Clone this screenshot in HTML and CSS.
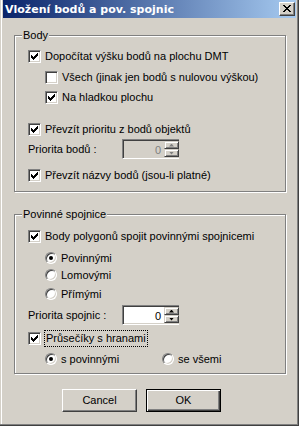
FILE: index.html
```html
<html>
    <head>
        <link rel="stylesheet" href="styles.css">
    </head>
    <body>
        <div class="window">
            <div class="titlebar">
                <span class="title">Vložení bodů a pov. spojnic</span>
                <span class="close">
                    <svg width="8" height="7" viewBox="0 0 8 7" shape-rendering="crispEdges"><path d="M0 0h2v1h-2z M6 0h2v1h-2z M1 1h2v1h-2z M5 1h2v1h-2z M2 2h4v1h-4z M3 3h2v1h-2z M2 4h4v1h-4z M1 5h2v1h-2z M5 5h2v1h-2z M0 6h2v1h-2z M6 6h2v1h-2z" fill="#000"/></svg>
                </span>
            </div>

            <div class="group g1">
                <span class="legend">Body</span>
                <div class="row r1"><span class="cb on"></span><span class="lbl">Dopočítat výšku bodů na plochu DMT</span></div>
                <div class="row r2 sub"><span class="cb"></span><span class="lbl">Všech (jinak jen bodů s nulovou výškou)</span></div>
                <div class="row r3 sub"><span class="cb on"></span><span class="lbl">Na hladkou plochu</span></div>
                <div class="row r4"><span class="cb on"></span><span class="lbl">Převzít prioritu z bodů objektů</span></div>
                <div class="spinrow s1">
                    <span class="spinlbl">Priorita bodů :</span>
                    <span class="spin disabled"><span class="field">0</span><span class="arrows"><span class="arr up"></span><span class="arr down"></span></span></span>
                </div>
                <div class="row r6"><span class="cb on"></span><span class="lbl">Převzít názvy bodů (jsou-li platné)</span></div>
            </div>

            <div class="group g2">
                <span class="legend">Povinné spojnice</span>
                <div class="row q1"><span class="cb on"></span><span class="lbl">Body polygonů spojit povinnými spojnicemi</span></div>
                <div class="row rad q2 sub"><span class="rb on"></span><span class="lbl">Povinnými</span></div>
                <div class="row rad q3 sub"><span class="rb"></span><span class="lbl">Lomovými</span></div>
                <div class="row rad q4 sub"><span class="rb"></span><span class="lbl">Přímými</span></div>
                <div class="spinrow s2">
                    <span class="spinlbl">Priorita spojnic :</span>
                    <span class="spin"><span class="field">0</span><span class="arrows"><span class="arr up"></span><span class="arr down"></span></span></span>
                </div>
                <div class="row q6"><span class="cb on"></span><span class="lbl focus">Průsečíky s hranami</span></div>
                <div class="row rad q7 sub">
                    <span class="rb on"></span><span class="lbl opt1">s povinnými</span>
                    <span class="rb"></span><span class="lbl">se všemi</span>
                </div>
            </div>

            <div class="buttons">
                <div class="btn">Cancel</div>
                <div class="btn def">OK</div>
            </div>
        </div>
    </body>
</html>
```

FILE: styles.css
```css
body {
    margin: 0;
    font-family: "Liberation Sans", Arial, sans-serif;
    font-size: 11px;
    color: #000;
}
.window {
    width: 299px;
    height: 426px;
    box-sizing: border-box;
    background: #d4d0c8;
    padding: 0 3px 3px 3px;
    box-shadow: inset -1px -1px 0 #404040, inset -2px -2px 0 #808080, inset 1px 0 0 #d4d0c8, inset 2px 0 0 #fff;
    overflow: hidden;
}
.titlebar {
    height: 18px;
    display: flex;
    align-items: center;
    padding-left: 2px;
    background: linear-gradient(to right, #0a246a, #a6caf0);
}
.title {
    flex: 1;
    color: #fff;
    font-family: "DejaVu Sans", "Liberation Sans", sans-serif;
    font-weight: bold;
    font-size: 11px;
}
.close {
    width: 16px;
    height: 14px;
    margin-right: 1px;
    box-sizing: border-box;
    background: #d4d0c8;
    border: 1px solid;
    border-color: #fff #404040 #404040 #fff;
    box-shadow: inset -1px -1px 0 #808080;
    display: flex;
    padding: 2px 0 0 3px;
}

/* group boxes */
.group {
    position: relative;
    box-sizing: border-box;
    width: 272px;
    margin-left: 11px;
    border: 1px solid #808080;
    box-shadow: 1px 1px 0 #fff, inset 1px 1px 0 #fff;
    padding-left: 13px;
}
.g1 {
    margin-top: 17px;
    height: 157px;
    padding-top: 14px;
}
.g2 {
    margin-top: 22px;
    height: 160px;
    padding-top: 15px;
}
.legend {
    position: absolute;
    top: -7px;
    left: 7px;
    padding: 0 1px;
    background: #d4d0c8;
    line-height: 13px;
}

.row {
    display: flex;
    align-items: center;
    height: 13px;
    line-height: 13px;
}
.row.rad {
    height: 12px;
}
.sub {
    margin-left: 17px;
}
.r2 { margin-top: 8px; }
.r3 { margin-top: 7px; }
.r4 { margin-top: 19px; }
.s1 { margin-top: 3px; }
.r6 { margin-top: 10px; }
.q2 { margin-top: 9px; }
.q3 { margin-top: 5px; }
.q4 { margin-top: 7px; }
.s2 { margin-top: 5px; }
.q6 { margin-top: 7px; }
.q7 { margin-top: 8px; }

.lbl {
    margin-left: 4px;
    white-space: nowrap;
}
.opt1 {
    width: 101px;
}
.focus {
    outline: 1px dotted #000;
    outline-offset: 1px;
    margin-left: 5px;
}

/* checkbox */
.cb {
    width: 13px;
    height: 13px;
    box-sizing: border-box;
    flex: none;
    background: #fff;
    border: 1px solid;
    border-color: #808080 #fff #fff #808080;
    box-shadow: inset 1px 1px 0 #404040, inset -1px -1px 0 #d4d0c8;
}
.cb.on {
    background: #fff url("data:image/svg+xml;utf8,<svg xmlns='http://www.w3.org/2000/svg' width='7' height='7' shape-rendering='crispEdges'><path d='M6 0h1v1h-1z M5 1h2v1h-2z M0 2h1v1h-1z M4 2h3v1h-3z M0 3h2v1h-2z M3 3h3v1h-3z M0 4h5v1h-5z M1 5h3v1h-3z M2 6h1v1h-1z' fill='black'/></svg>") no-repeat 2px 2px;
}

/* radio */
.rb {
    width: 12px;
    height: 12px;
    box-sizing: border-box;
    flex: none;
    border-radius: 50%;
    background: #fff;
    border: 1px solid;
    border-color: #808080 #fff #fff #808080;
    box-shadow: inset 1px 1px 0 #404040, inset -1px -1px 0 #d4d0c8;
    display: flex;
    align-items: center;
    justify-content: center;
}
.rb.on::after {
    content: "";
    width: 4px;
    height: 4px;
    border-radius: 50%;
    background: #000;
}

/* spin boxes */
.spinrow {
    display: flex;
    align-items: center;
    height: 20px;
}
.spinlbl {
    width: 94px;
}
.spin {
    display: flex;
    width: 57px;
    height: 20px;
    box-sizing: border-box;
    background: #fff;
    border: 1px solid;
    border-right: none;
    border-color: #808080 #fff #fff #808080;
    box-shadow: inset 1px 1px 0 #404040, inset 0 -1px 0 #d4d0c8;
    padding: 1px 0 1px 1px;
}
.spin .field {
    flex: 1;
    text-align: right;
    line-height: 16px;
    padding: 1px 3px 0 0;
}
.spin.disabled {
    background: #d4d0c8;
    color: #808080;
}
.arrows {
    width: 15px;
    display: flex;
    flex-direction: column;
}
.arr {
    flex: 1;
    box-sizing: border-box;
    background: #d4d0c8;
    border: 1px solid;
    border-color: #d4d0c8 #404040 #404040 #d4d0c8;
    box-shadow: inset 1px 1px 0 #fff, inset -1px -1px 0 #808080;
    display: flex;
    align-items: center;
    justify-content: center;
}
.arr::after {
    content: "";
    width: 5px;
    height: 3px;
    background: #000;
}
.arr.up::after {
    clip-path: polygon(50% 0, 100% 100%, 0 100%);
}
.arr.down::after {
    clip-path: polygon(0 0, 100% 0, 50% 100%);
}
.disabled .arr::after {
    background: #808080;
}

/* buttons */
.buttons {
    display: flex;
    gap: 9px;
    margin: 15px 0 0 59px;
}
.btn {
    width: 75px;
    height: 23px;
    box-sizing: border-box;
    border: 1px solid;
    border-color: #fff #404040 #404040 #fff;
    box-shadow: inset -1px -1px 0 #808080;
    text-align: center;
    line-height: 21px;
}
.btn.def {
    border-color: #000;
    box-shadow: inset 1px 1px 0 #fff, inset -1px -1px 0 #404040, inset -2px -2px 0 #808080;
}
```
